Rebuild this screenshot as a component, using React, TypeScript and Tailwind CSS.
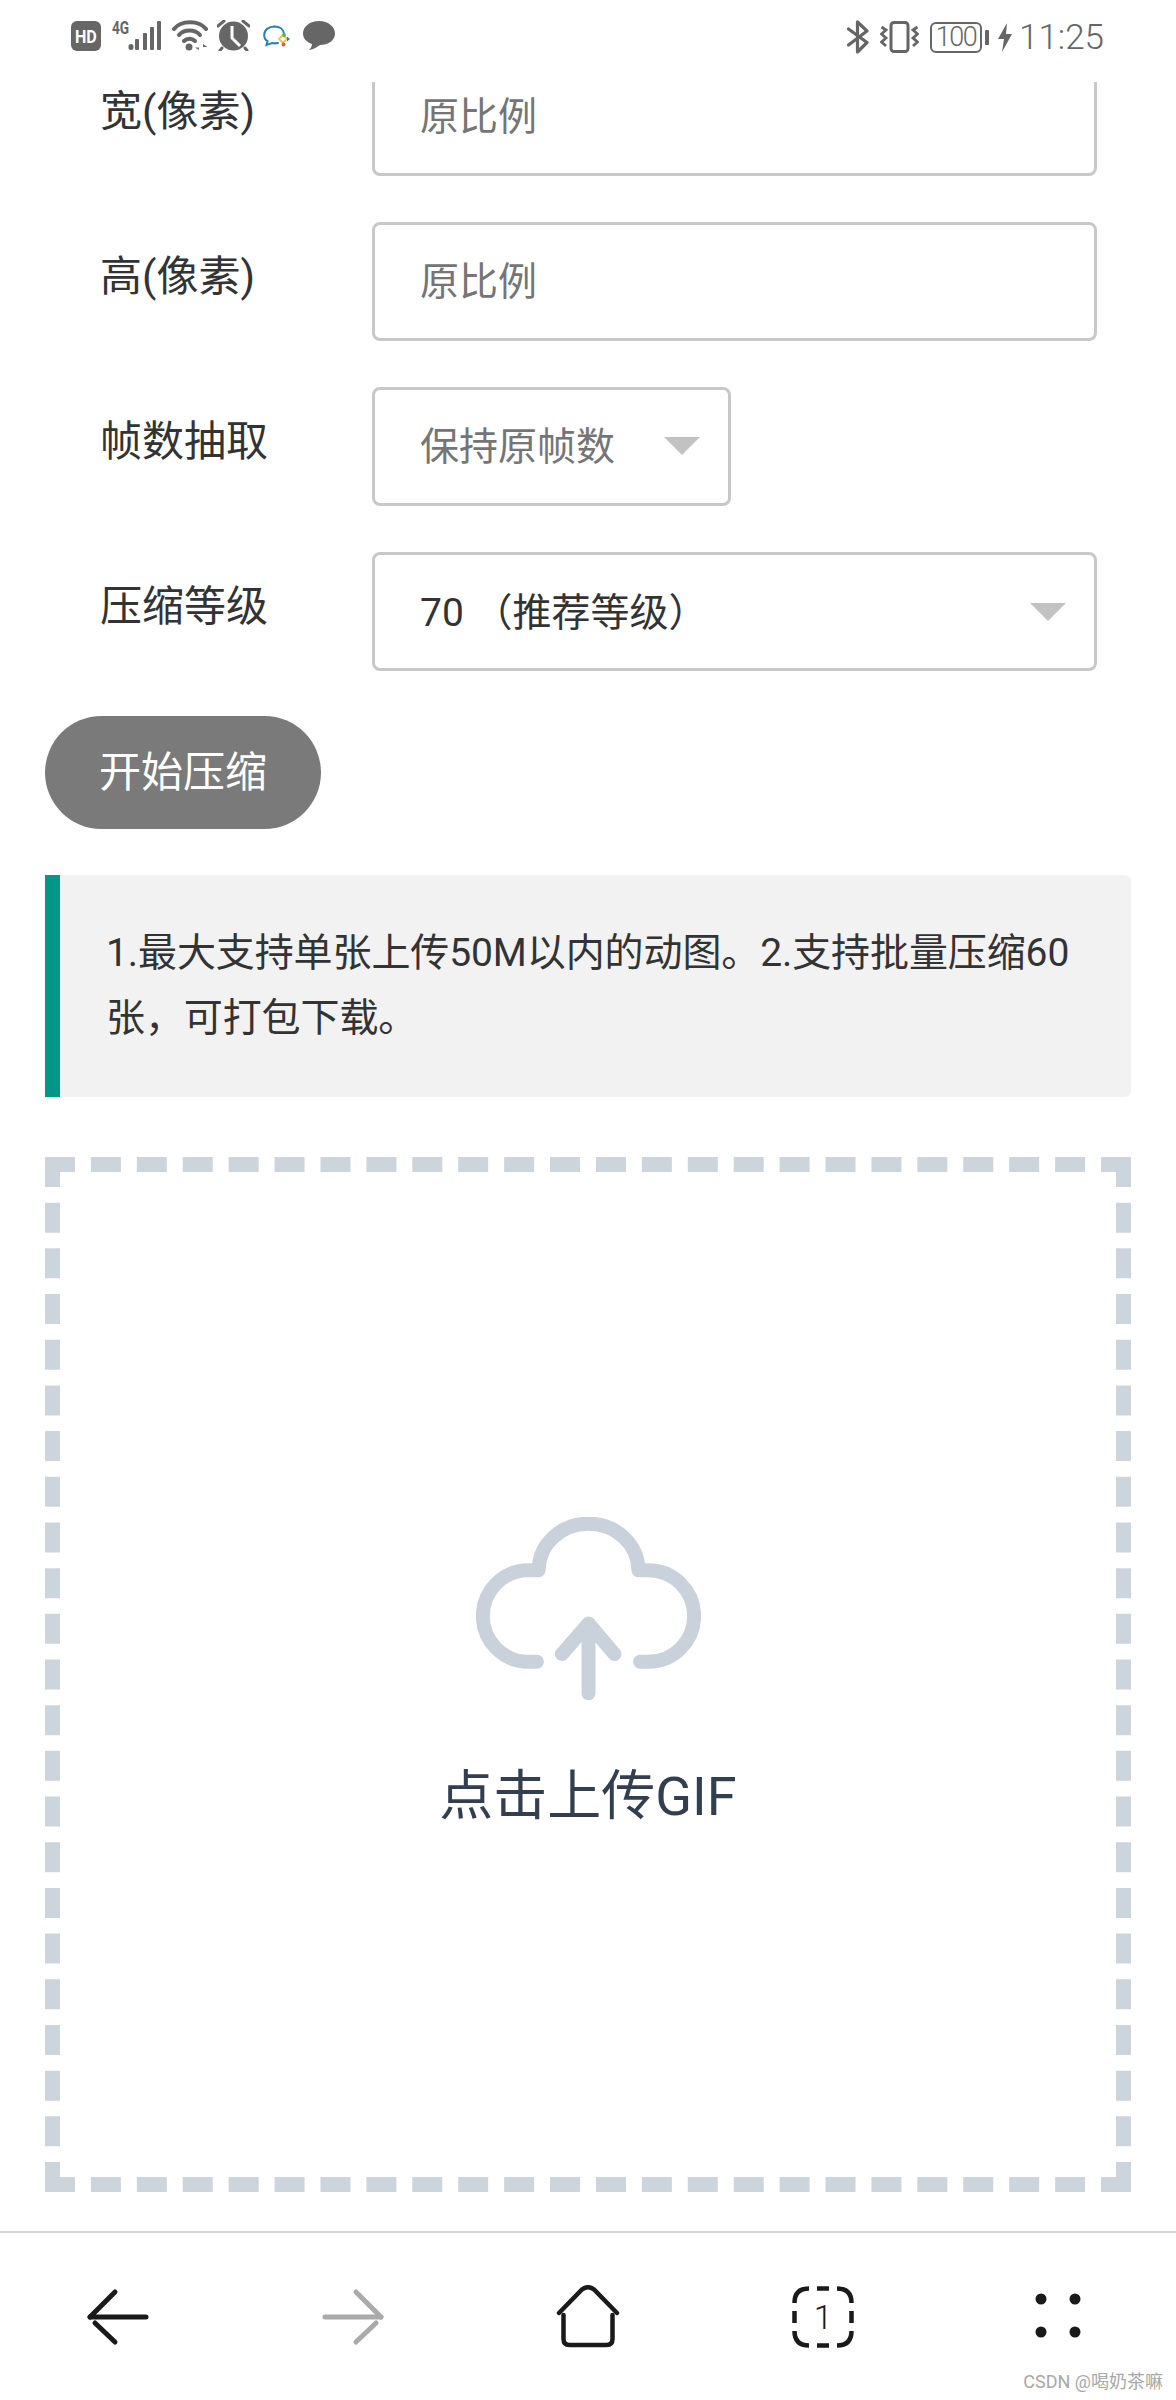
import React from "react";

function HdIcon() {
  return (
    <div className="w-[30px] h-[30px] mt-[1px] rounded-[6px] bg-[#666] flex items-center justify-center">
      <span className="text-white text-[19px] font-bold leading-none font-['Roboto',sans-serif] scale-x-[0.85]">HD</span>
    </div>
  );
}

function SignalIcon() {
  return (
    <div className="relative w-[51px] h-[30px]">
      <span className="absolute left-[0px] -top-[1px] text-[19px] font-bold leading-[16px] text-[#666] font-['Roboto',sans-serif] scale-x-[0.72] origin-left ml-[2px]">
        4G
      </span>
      <svg viewBox="110 21 51 30" className="absolute inset-0 w-[51px] h-[30px]" fill="#666">
        <rect x="128.5" y="44" width="5" height="6" rx="2.5" />
        <rect x="135" y="39" width="4" height="11" rx="1" />
        <rect x="143" y="33" width="4" height="17" rx="1" />
        <rect x="150" y="27" width="4" height="23" rx="1" />
        <rect x="157" y="21" width="4" height="29" rx="1" />
      </svg>
    </div>
  );
}

function WifiIcon() {
  return (
    <svg viewBox="170 20 38 31" className="w-[38px] h-[31px]" fill="none" stroke="#666" strokeWidth="4" strokeLinecap="round">
      <path d="M174 29 C181 20 199 20 206 29" />
      <path d="M179 35 C184 29 195 29 200 35" />
      <path d="M184 41 C187 38 192 38 195 41" />
      <circle cx="189" cy="47" r="3.5" fill="#666" stroke="none" />
      <path d="M199 43.5 V50 L195 47.5 H199 Z M203 50.5 V44 L207.5 47 H203 Z" fill="#666" stroke="none" />
    </svg>
  );
}

function AlarmIcon() {
  return (
    <svg viewBox="217 20 33 31" className="w-[33px] h-[31px]">
      <circle cx="233.5" cy="36" r="14.5" fill="#666" />
      <path d="M232 26 V38 L240 46" fill="none" stroke="#fff" strokeWidth="3" />
      <path d="M218 26 L224 21 M249 26 L243 21 M222 48 L220 50.5 M245 48 L247 50.5" fill="none" stroke="#666" strokeWidth="3" strokeLinecap="round" />
    </svg>
  );
}

function ChatColorIcon() {
  return (
    <svg viewBox="0 0 27 22" className="w-[27px] h-[22px] ml-[4px]">
      <path d="M11.5 1.5 C5.5 1.5 1.2 5 1.2 10 C1.2 13 2.5 15 4.5 16.2 L3.5 20 L9 18 C11 18.5 13 18.5 15 18" fill="none" stroke="#2a7fbd" strokeWidth="2" strokeLinecap="round" />
      <path d="M11.5 1.5 C17 1.5 20.5 4.5 21 8.5" fill="none" stroke="#2a7fbd" strokeWidth="2" strokeLinecap="round" />
      <path d="M20 10 L24 14 L20 18 L16 14 Z" fill="#fff" stroke="#e8c84a" strokeWidth="1.8" />
      <circle cx="21" cy="10" r="2" fill="#6aaf4c" />
      <circle cx="20.5" cy="19.5" r="2" fill="#d9603b" />
      <path d="M24 11.5 L27 14 L24 16.5 Z" fill="#2a7fbd" />
    </svg>
  );
}

function BubbleIcon() {
  return (
    <svg viewBox="0 0 32 29" className="w-[32px] h-[29px] ml-[4px]" fill="#666">
      <path d="M16 0 C25 0 32 5.5 32 12.5 C32 19.5 25 24 17 24 C14 26 11 28.5 6 29 C8 27 9 25 9 23 C3.5 21 0 17.5 0 12.5 C0 5.5 7 0 16 0 Z" />
    </svg>
  );
}

function BluetoothIcon() {
  return (
    <svg viewBox="0 0 22 34" className="w-[22px] h-[34px] mr-[2px]" fill="none" stroke="#666" strokeWidth="3.2" strokeLinejoin="round" strokeLinecap="round">
      <path d="M1.5 25 L20 11 L10.5 2 V32 L20 22.5 L1.5 9" />
    </svg>
  );
}

function VibrateIcon() {
  return (
    <svg viewBox="0 0 39 32" className="w-[39px] h-[32px] mr-[2px]" fill="none" stroke="#666">
      <rect x="11" y="1.5" width="17" height="29" rx="3" strokeWidth="3" />
      <path d="M1.5 6 L6 9 L1.5 13 L6 17 L1.5 21 L6 25" strokeWidth="2.8" />
      <path d="M37.5 6 L33 9 L37.5 13 L33 17 L37.5 21 L33 25" strokeWidth="2.8" />
    </svg>
  );
}

function BatteryIcon() {
  return (
    <div className="flex items-center gap-[3px]">
      <div className="w-[52px] h-[31px] border-[2.5px] border-[#666] rounded-[6px] flex items-center justify-center text-[27px] tracking-[-1.5px] leading-none text-[#666] font-light">
        100
      </div>
      <div className="w-[4px] h-[15px] bg-[#666] rounded-[1px]" />
    </div>
  );
}

function BoltIcon() {
  return (
    <svg viewBox="0 0 14 29" className="w-[14px] h-[29px]" fill="#666">
      <path d="M9 0 L0 16 H6 L4 29 L14 11 H8 Z" />
    </svg>
  );
}

function StatusBar() {
  return (
    <div className="absolute top-0 inset-x-0 h-[82px] bg-white flex justify-between items-start pt-[20px] pl-[71px] pr-[72px]">
      <div className="flex items-center gap-[9px]">
        <HdIcon />
        <SignalIcon />
        <WifiIcon />
        <AlarmIcon />
        <ChatColorIcon />
        <BubbleIcon />
      </div>
      <div className="flex items-center gap-[9px]">
        <BluetoothIcon />
        <VibrateIcon />
        <BatteryIcon />
        <BoltIcon />
        <span className="-ml-[2px] text-[35px] leading-[31px] font-light text-[#666]">11:25</span>
      </div>
    </div>
  );
}

function Caret() {
  return (
    <svg viewBox="0 0 36 18" className="w-[36px] h-[18px] shrink-0 -mt-[3px]">
      <path d="M0 0 H36 L18 18 Z" fill="#c2c2c2" />
    </svg>
  );
}

function FormRow({ label, children }: { label: string; children: React.ReactNode }) {
  return (
    <div className="flex">
      <label className="w-[372px] h-[119px] pl-[100px] pb-[10px] flex items-center text-[42px] text-[#333]">
        {label}
      </label>
      {children}
    </div>
  );
}

function TextBox({ placeholder }: { placeholder: string }) {
  return (
    <div className="w-[725px] h-[119px] border-[3px] border-[#c8c8c8] rounded-[8px] pl-[45px] pt-[2px] flex items-center text-[39px] text-[#757575]">
      {placeholder}
    </div>
  );
}

function BackIcon({ color }: { color: string }) {
  return (
    <svg viewBox="0 0 64 64" className="w-[64px] h-[64px]" fill="none" stroke={color} strokeWidth="5" strokeLinecap="round">
      <path d="M4 32 H60" />
      <path d="M29 7 L4 32" />
      <path d="M9 38 L29 57" />
    </svg>
  );
}

function ForwardIcon({ color }: { color: string }) {
  return (
    <svg viewBox="0 0 64 64" className="w-[64px] h-[64px]" fill="none" stroke={color} strokeWidth="5" strokeLinecap="round">
      <path d="M4 32 H60" />
      <path d="M35 7 L60 32" />
      <path d="M55 38 L35 57" />
    </svg>
  );
}

function HomeIcon() {
  return (
    <svg viewBox="0 0 64 64" className="w-[64px] h-[64px]" fill="none" stroke="#1a1a1a" strokeWidth="4.5" strokeLinecap="round">
      <path d="M3 28 L26 4.5 Q32 0 38 4.5 L61 28" />
      <path d="M7.5 30 V54 Q7.5 60 13.5 60 H50.5 Q56.5 60 56.5 54 V30" />
    </svg>
  );
}

function TabsIcon() {
  return (
    <div className="relative w-[64px] h-[64px]">
      <svg viewBox="0 0 64 64" className="w-[64px] h-[64px]" fill="none" stroke="#1a1a1a" strokeWidth="4.5">
        <path d="M18 3.5 Q3.5 3.5 3.5 18" />
        <path d="M46 3.5 Q60.5 3.5 60.5 18" />
        <path d="M18 60.5 Q3.5 60.5 3.5 46" />
        <path d="M46 60.5 Q60.5 60.5 60.5 46" />
        <path d="M26 3.5 H38 M26 60.5 H38 M3.5 26 V38 M60.5 26 V38" />
      </svg>
      <span className="absolute inset-0 flex items-center justify-center text-[34px] leading-none font-light text-[#1a1a1a]">
        1
      </span>
    </div>
  );
}

function GridIcon() {
  return (
    <svg viewBox="0 0 64 64" className="w-[64px] h-[64px]" fill="#1a1a1a">
      <circle cx="15" cy="14" r="5.5" />
      <circle cx="49" cy="14" r="5.5" />
      <circle cx="15" cy="47" r="5.5" />
      <circle cx="49" cy="47" r="5.5" />
    </svg>
  );
}

function CloudIcon() {
  return (
    <svg viewBox="228 110 674 550" className="w-[225px] h-[183px]" fill="none" stroke="#c9d2da" strokeWidth="42" strokeLinecap="round" strokeLinejoin="round">
      <path d="M410 545 H385 A137 137 0 0 1 385 270 H415 A150 140 0 0 1 715 270 H745 A137 137 0 0 1 745 545 H720" />
      <path d="M565 640 V432" />
      <path d="M485 522 L565 430 L643 522" />
    </svg>
  );
}

export default function App() {
  return (
    <div className="relative w-[1176px] h-[2400px] overflow-hidden bg-white font-['Roboto','Noto_Sans_CJK_SC',sans-serif]">
      <StatusBar />

      <div className="pt-[57px] flex flex-col">
        <div className="flex flex-col gap-[46px]">
          <FormRow label="宽(像素)">
            <TextBox placeholder="原比例" />
          </FormRow>
          <FormRow label="高(像素)">
            <TextBox placeholder="原比例" />
          </FormRow>
          <FormRow label="帧数抽取">
            <div className="w-[359px] h-[119px] border-[3px] border-[#c8c8c8] rounded-[8px] pl-[45px] pr-[28px] pt-[2px] flex items-center justify-between text-[39px] text-[#757575]">
              保持原帧数
              <Caret />
            </div>
          </FormRow>
          <FormRow label="压缩等级">
            <div className="w-[725px] h-[119px] border-[3px] border-[#c8c8c8] rounded-[8px] pl-[45px] pr-[28px] pt-[3px] flex items-center justify-between text-[39px] text-[#333]">
              70 （推荐等级）
              <Caret />
            </div>
          </FormRow>
        </div>

        <div className="mt-[45px] ml-[45px] w-[276px] h-[113px] rounded-full bg-[#7a7a7a] flex items-center justify-center text-[42px] text-white">
          开始压缩
        </div>

        <div className="mt-[46px] mx-[45px] h-[222px] bg-[#f2f2f2] border-l-[15px] border-[#009688] rounded-r-[6px] pl-[46px] pr-[50px] flex items-center text-[39px] leading-[65px] tracking-[-0.1px] text-[#333]">
          1.最大支持单张上传50M以内的动图。2.支持批量压缩60张，可打包下载。
        </div>

        <div className="mt-[60px] mx-[45px] h-[1035px] border-[15px] border-dashed border-[#cdd5dc] flex flex-col items-center pt-[345px]">
          <CloudIcon />
          <p className="mt-[65px] text-[54px] leading-[64px] text-[#333f4f]">点击上传GIF</p>
        </div>

        <nav className="mt-[39px] h-[169px] border-t-2 border-[#d4d4d4] pt-[52px] grid grid-cols-5 justify-items-center items-start">
          <BackIcon color="#1a1a1a" />
          <ForwardIcon color="#aaaaaa" />
          <HomeIcon />
          <TabsIcon />
          <GridIcon />
        </nav>
      </div>

      <span className="absolute right-[13px] bottom-[6px] text-[18px] leading-[24px] text-[#a8a8a8]">CSDN @喝奶茶嘛</span>
    </div>
  );
}
